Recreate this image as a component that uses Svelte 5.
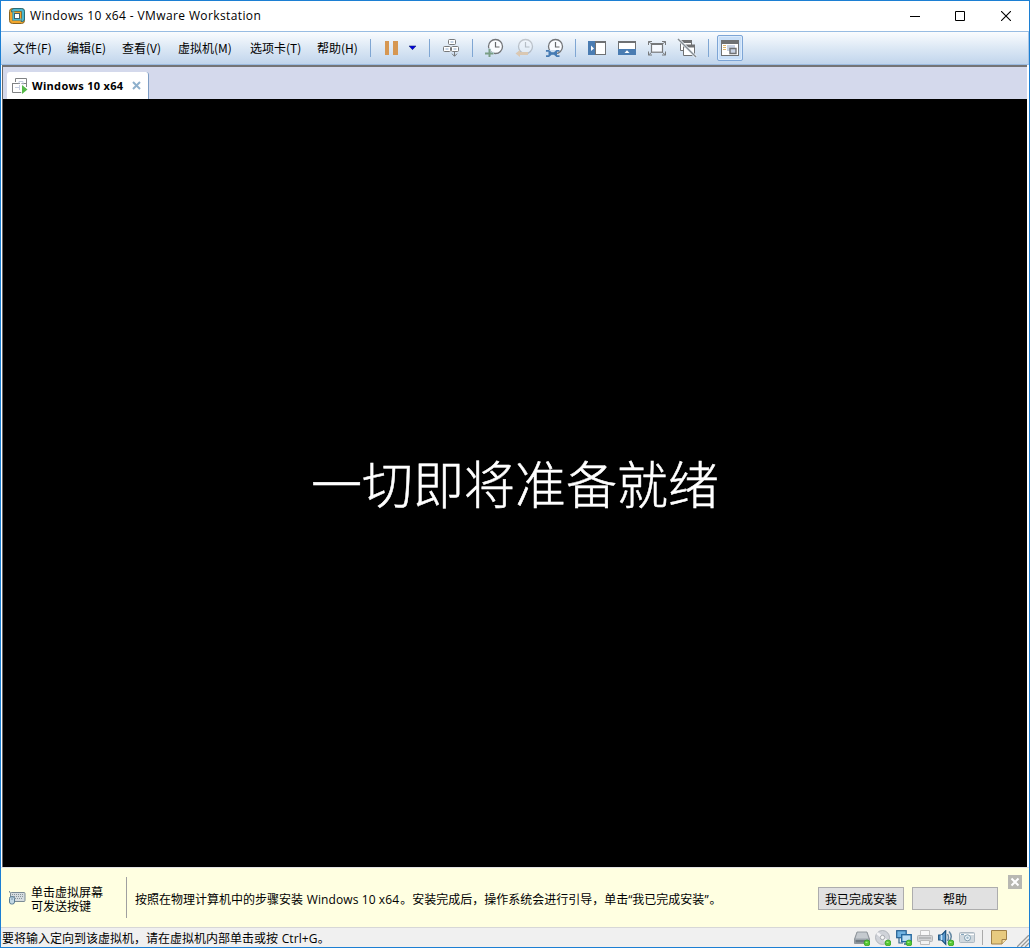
<script>
  const menus = [
    ['文件(F)', 54], ['编辑(E)', 55], ['查看(V)', 56],
    ['虚拟机(M)', 72], ['选项卡(T)', 67], ['帮助(H)', 53]
  ];
</script>

{#snippet clock(faded)}
  <g opacity={faded ? 0.35 : 1}>
    <circle cx="11.5" cy="8.5" r="7" fill="#fafcff" stroke="#737578" stroke-width="1.3" />
    <path d="M11.5 4v5h4" fill="none" stroke="#66696c" stroke-width="1.2" />
  </g>
{/snippet}

{#snippet dot()}
  <circle cx="13" cy="13" r="3" fill="#55c632" stroke="#2e9a28" stroke-width=".7" />
  <path d="M11.5 12.3h2" stroke="#b9f59b" />
{/snippet}

<div class="window">
  <header class="title">
    <svg class="logo" width="16" height="16" viewBox="0 0 16 16">
      <rect x=".5" y=".5" width="15" height="15" rx="3" fill="#f1a52d" stroke="#8b6420" />
      <path d="M2.5 3V2.5Q2.8.5 5 .5h7.5q3 0 3 3V11q0 2-2 2.5H12V4H2.5z" fill="#4ab8d0" stroke="#176278" stroke-width=".8" />
      <path d="M3.5 3.5h9v9h-9z" fill="#f1a52d" stroke="#70531e" stroke-width=".6" />
      <path d="M3.5 3.5h2v7h7v2h-9z" fill="#4ab8d0" />
      <rect x="5.5" y="5.5" width="5" height="5" fill="#fff" stroke="#3f6169" />
    </svg>
    <span class="caption">Windows 10 x64 - VMware Workstation</span>
    <div class="controls">
      <svg width="10" height="10"><path d="M0 5.5h10" stroke="#000" /></svg>
      <svg width="10" height="10"><path d="M.5.5h9v9h-9z" fill="none" stroke="#000" /></svg>
      <svg width="10" height="10"><path d="M0 0l10 10M10 0L0 10" stroke="#000" stroke-width="1.1" /></svg>
    </div>
  </header>

  <nav class="toolbar">
    {#each menus as [label, width]}
      <span class="menu" style="width:{width}px">{label}</span>
    {/each}
    <i class="sep"></i>
    <svg class="ic pause" width="20" height="20"><path d="M5 3h4v14H5zM13 3h5v14h-5z" fill="#d69752" /></svg>
    <svg class="drop" width="9" height="6"><path d="M1 1h7L4.5 4.7z" fill="#0000e0" stroke="#1b2b70" stroke-width=".6" /></svg>
    <i class="sep s2"></i>
    <svg class="ic cad" width="20" height="20" fill="#fff" stroke="#77797b">
      <path d="M7.5 1.5h7v5h-7zM2.5 8.5h15v5h-15z" stroke="none" />
      <path d="M9.5 4h3M4.5 11h3M12.5 11h3" stroke="#c5d4e6" stroke-width="2" />
      <g fill="none"><rect x="7.5" y="1.5" width="7" height="5" rx="1" /><rect x="2.5" y="8.5" width="7" height="5" rx="1" /><rect x="10.5" y="8.5" width="7" height="5" rx="1" /></g>
      <path d="M13.5 14v4M11 15.7l2.5 2.6 2.5-2.6" fill="none" />
    </svg>
    <i class="sep s3"></i>
    <svg class="ic c1" width="20" height="20">{@render clock(false)}
      <path d="M5.5 10.5v9M1 15.5h9" stroke="#d4e3f2" stroke-width="3.4" /><path d="M5.5 11v8M1 15.5h8.5" stroke="#799e86" stroke-width="2" />
    </svg>
    <svg class="ic" width="20" height="20">{@render clock(true)}
      <path d="M1.5 15.5L6 12v2h8v3H6v2z" fill="#dac8b3" />
    </svg>
    <svg class="ic" width="20" height="20">{@render clock(false)}
      <path d="M1 12h12v7H1z" fill="#cfdff0" />
      <path d="M5 15.5h6" stroke="#467bb3" stroke-width="2.6" />
      <path d="M2 12h3l2.3 2v3L5 19H2v-1.8h2.5v-3.4H2zM15.5 12h-3l-2.3 2v3l2.3 2h3v-1.8H13v-3.4h2.5z" fill="#467bb3" />
    </svg>
    <i class="sep s4"></i>
    <svg class="ic v1" width="20" height="20">
      <path d="M1 3h18v14H1z" fill="#6f7173" /><path d="M1 3h7v14H1z" fill="#4a7cb2" /><path d="M9 5h9v11H9z" fill="#fff" /><path d="M4 7.5L7 10.5 4 13z" fill="#fff" />
    </svg>
    <svg class="ic" width="20" height="20">
      <path d="M1 3h18v9H1z" fill="#6f7173" /><path d="M2 5h16v6H2z" fill="#fff" /><path d="M1 11h18v6H1z" fill="#4a7cb2" /><path d="M7.5 15L10 12.3 12.5 15z" fill="#fff" />
    </svg>
    <svg class="ic" width="20" height="20" fill="none" stroke="#77797b" stroke-width="1.2">
      <rect x="4.5" y="6.2" width="11" height="8" fill="#f7faff" /><path d="M4 6h12" stroke-width="2" />
      <path d="M1.5 7V3.5H5M1.5 3.5l3 2.5M15 3.5h3.5V7M18.5 3.5l-3 2.5M1.5 13.5V17H5M1.5 17l3-2.5M15 17h3.5v-3.5M18.5 17l-3-2.5" stroke-width="1" />
    </svg>
    <svg class="ic" width="20" height="20">
      <path d="M3.5 2.5h11v10h-11z" fill="#fff" stroke="#6f7173" /><path d="M3 2h12v3H3z" fill="#6f7173" />
      <path d="M6.5 7.5h11v10h-11z" fill="#fff" stroke="#6f7173" /><path d="M6 6.5h12v3H6z" fill="#6f7173" />
      <path d="M1 1l18 18" stroke="#edf4fc" stroke-width="3" /><path d="M1 1l18 18" stroke="#858b90" stroke-width="1.5" />
    </svg>
    <i class="sep s5"></i>
    <span class="active">
      <svg width="20" height="20">
        <path d="M1 2h18v16H1z" fill="#6f7173" /><path d="M2 6h16v11H2z" fill="#fff" />
        <path d="M3 7.5h3M3 9.5h3M3 11.5h3" stroke="#deb56d" /><path d="M7 7h8v6H7z" fill="#c9d3e5" />
        <path d="M10 10.5h6v5h-6z" fill="#c9d3e5" stroke="#6f7173" stroke-width="1.4" />
      </svg>
    </span>
  </nav>

  <div class="tabs">
    <div class="tab">
      <svg width="16" height="16" viewBox="0 0 16 16">
        <path d="M3.5.5h11v11h-11z" fill="#fff" stroke="none" />
        <path d="M3.5 4V.5h11V9M.5 5.5H8M.5 5v9.5h9M9.5 5.5H14" fill="none" stroke="#808284" />
        <path d="M7 5.5V3.5h4v4M3 9.5h4M7.5 7v5" stroke="#c7cfe2" fill="none" />
        <path d="M9.5 5.8v10.2l6.5-5z" fill="#fff" /><path d="M10 7v9l5.5-4.5z" fill="#55b948" />
      </svg>
      <b>Windows 10 x64</b>
      <svg class="tabx" width="9" height="9"><path d="M1 1l7 7M8 1L1 8" stroke="#8eb0cc" stroke-width="2" /></svg>
    </div>
  </div>

  <main class="screen"><p>一切即将准备就绪</p></main>

  <section class="notice">
    <svg class="kbd" width="17" height="14" viewBox="0 0 17 14">
      <path d="M0 0l2 3" stroke="#6c8390" /><rect x="1.5" y="1.5" width="14.5" height="9" rx="1" fill="#d6dde0" stroke="#7b8b94" />
      <path d="M3 3.5h12M3 5.5h12M6 7.5h7" stroke="#89949a" stroke-dasharray="1 1" />
      <rect x=".5" y="5.5" width="5" height="7.5" rx="2" fill="#c2d8e5" stroke="#597b92" /><path d="M3 5.5V9" stroke="#597b92" stroke-width=".7" />
    </svg>
    <p class="hint">单击虚拟屏幕<br />可发送按键</p>
    <i class="rule"></i>
    <p class="message">按照在物理计算机中的步骤安装 <span class="latin">Windows 10 x64</span><span class="stop">。</span>安装完成后，操作系统会进行引导，单击<span class="q">“</span>我已完成安装<span class="q">”</span><span class="stop">。</span></p>
    <div class="actions"><button>我已完成安装</button><button>帮助</button></div>
    <svg class="dismiss" width="14" height="14"><rect width="14" height="14" fill="#b8b8b2" /><path d="M3.5 3.5l7 7M10.5 3.5l-7 7" stroke="#fff" stroke-width="2" /></svg>
  </section>

  <footer class="status">
    <span class="tip">要将输入定向到该虚拟机，请在虚拟机内部单击或按 <span class="latin">Ctrl+G</span>。</span>
    <div class="devices">
      <svg width="16" height="16">
        <path d="M3 2h10l2.5 7v4.5H.5V9z" fill="#9da5ac" stroke="#81888e" stroke-width=".8" /><path d="M3.5 2.5h9l2 6h-13z" fill="#c5cacf" /><path d="M1.5 10h13v2.5h-13z" fill="#6e7880" />{@render dot()}
      </svg>
      <svg width="16" height="16">
        <circle cx="7.5" cy="7.5" r="7" fill="#d0d3d9" stroke="#a6abb2" stroke-width=".8" /><path d="M7.5 7.5L2 3M7.5 7.5l5 4.5" stroke="#f4f4f6" stroke-width="2.5" /><circle cx="7.5" cy="7.5" r="2.2" fill="#f6f6f6" stroke="#a6aab0" />{@render dot()}
      </svg>
      <svg width="16" height="16">
        <rect x=".7" y=".7" width="9.5" height="7" fill="#70b2e2" stroke="#245e91" stroke-width="1.2" /><path d="M3 8v5h4" fill="none" stroke="#34678c" stroke-width="1.2" />
        <rect x="5.7" y="4.7" width="9.5" height="7" fill="#b9ddf5" stroke="#2469a1" stroke-width="1.4" /><path d="M8 14h5" stroke="#34678c" stroke-width="1.5" />{@render dot()}
      </svg>
      <svg width="16" height="16">
        <path d="M3.5.5h9v5h-9z" fill="#f8f8f8" stroke="#c5c5c5" /><rect x=".5" y="5.5" width="15" height="6" rx="1" fill="#d2d3d5" stroke="#b3b4b6" /><path d="M2 8h12" stroke="#a6a8ab" stroke-width="1.3" /><path d="M3.5 10.5h9v4h-9z" fill="#f3f3f3" stroke="#bbb" />
      </svg>
      <svg width="16" height="16">
        <path d="M.7 5h3l4-4.3v13.6L3.7 10h-3z" fill="#5795ca" stroke="#174f7d" stroke-width="1.2" /><path d="M3.5 5v5" stroke="#c5e3f5" stroke-width="1.5" />
        <path d="M9.5 4q2 3.5 0 7M11 1.5q4.5 5 0 10" fill="none" stroke="#6689a4" stroke-width="1.5" />{@render dot()}
      </svg>
      <svg width="16" height="16">
        <rect x=".5" y="2.5" width="15" height="10" rx="1" fill="#d0d8de" stroke="#aeb9c2" /><path d="M1 4.5h14" stroke="#fff" /><circle cx="8.5" cy="7.8" r="3" fill="#edf5fa" stroke="#819dae" /><circle cx="8.5" cy="7.8" r="1.2" fill="#9fb8c9" /><path d="M2 4.5h3" stroke="#83a4bb" />
      </svg>
      <i class="divider"></i>
      <svg width="16" height="15"><path d="M.5.5h15v9l-4.5 4.5H.5z" fill="#e7ca80" stroke="#9f8048" /><path d="M11 14V9.5h4.5" fill="#f4dfaa" stroke="#9f8048" /></svg>
    </div>
    <svg class="grip" width="12" height="12"><path d="M0 12L12 0M4 12l8-8M8 12l4-4" stroke="#999" stroke-width="1.3" /></svg>
  </footer>
</div>

<style>
  :global(body) { margin: 0; background: #fff; }
  * { box-sizing: border-box; }
  svg { display: block; flex: none; }
  p { margin: 0; }
  .window { width: 1030px; height: 948px; overflow: hidden; display: flex; flex-direction: column; border: 1px solid #1c7fd3; background: #fff; color: #000; font: 12px/16px "Noto Sans CJK SC", sans-serif; white-space: nowrap; }
  .title { height: 30px; flex: none; display: flex; align-items: center; padding: 0 18px 1px 8px; }
  .caption { font: 12px/18px "Open Sans", sans-serif; letter-spacing: .38px; margin-left: 5px; }
  .controls { margin-left: auto; display: flex; }
  .controls svg + svg { margin-left: 35px; }
  .controls svg:last-child { margin-left: 36px; }
  .toolbar { height: 34px; flex: none; display: flex; align-items: center; padding-left: 12px; border-top: 1px solid #98bce2; border-bottom: 1px solid #9bbbe0; border-right: 1px solid #a9c6e6; background: linear-gradient(#fafcfe, #dce8f5 50%, #c1d5ec); }
  .menu { flex: none; }
  .sep { width: 1px; height: 18px; background: #7fa6d3; flex: none; }
  .pause { margin-left: 9px; }
  .drop { margin-left: 8px; }
  .s2 { margin-left: 12px; }
  .cad { margin-left: 11px; }
  .s3 { margin-left: 11px; }
  .c1 { margin-left: 11px; }
  .ic + .ic { margin-left: 10px; }
  .s4 { margin-left: 11px; }
  .v1 { margin-left: 11px; }
  .s5 { margin-left: 11px; }
  .active { width: 26px; height: 26px; flex: none; display: grid; place-items: center; margin-left: 8px; border: 1px solid #7da5d6; border-radius: 2px; background: #c9dff8; box-shadow: inset 0 0 0 1px #dcebfb; }
  .tabs { height: 34px; flex: none; margin: 0 2px 0 1px; padding: 5px 0 0 4px; border-top: 2px solid #747476; border-left: 1px solid #696969; background: #d4d9ec; }
  .tab { width: 142px; height: 27px; display: flex; align-items: center; padding: 0 7px 0 5px; border-right: 1px solid #7e9dc4; border-radius: 3px 3px 0 0; background: #fff; }
  .tab b { font: 700 11px/16px "Open Sans", sans-serif; letter-spacing: .3px; margin-left: 4px; }
  .tabx { margin: -1px 0 0 auto; }
  .screen { height: 768px; flex: none; margin: 0 2px 0 1px; padding: 0 0 3px; border-left: 1px solid #696969; background: #000; display: grid; place-items: center; }
  .screen p { color: #fff; font: 300 51px/70px "Noto Sans CJK SC", sans-serif; -webkit-text-stroke: .5px #fff; }
  .notice { height: 61px; flex: none; display: flex; align-items: center; padding: 2px 7px 0 8px; border-top: 1px solid #e3e3e3; border-bottom: 1px solid #d7d7d7; background: #ffffe1; }
  .kbd { margin-top: -2px; }
  .hint { line-height: 14px; margin-left: 5px; }
  .rule { width: 1px; height: 41px; background: #a0a0a0; margin: -2px 0 0 23px; }
  .message { margin-left: 8px; padding-top: 1px; }
  .latin { font-family: "Open Sans", sans-serif; letter-spacing: .1px; margin-left: 1px; }
  .q { font-family: "Open Sans", sans-serif; }
  .stop { margin-left: 1px; }
  .actions { display: flex; gap: 8px; margin: -1px 0 0 auto; }
  button { width: 86px; height: 23px; padding: 1px 0 0; border: 1px solid #adadad; background: #e1e1e1; color: #000; font: inherit; }
  .dismiss { align-self: flex-start; margin: 5px 0 0 10px; }
  .status { flex: 1; display: flex; align-items: center; background: #f0f0f0; }
  .tip { padding: 1px 0 0 1px; }
  .devices { margin-left: auto; display: flex; align-items: center; gap: 5px; }
  .divider { width: 1px; height: 15px; background: #aaa; margin: 0 3px 0 2px; }
  .grip { align-self: flex-end; margin-left: 10px; }
</style>
